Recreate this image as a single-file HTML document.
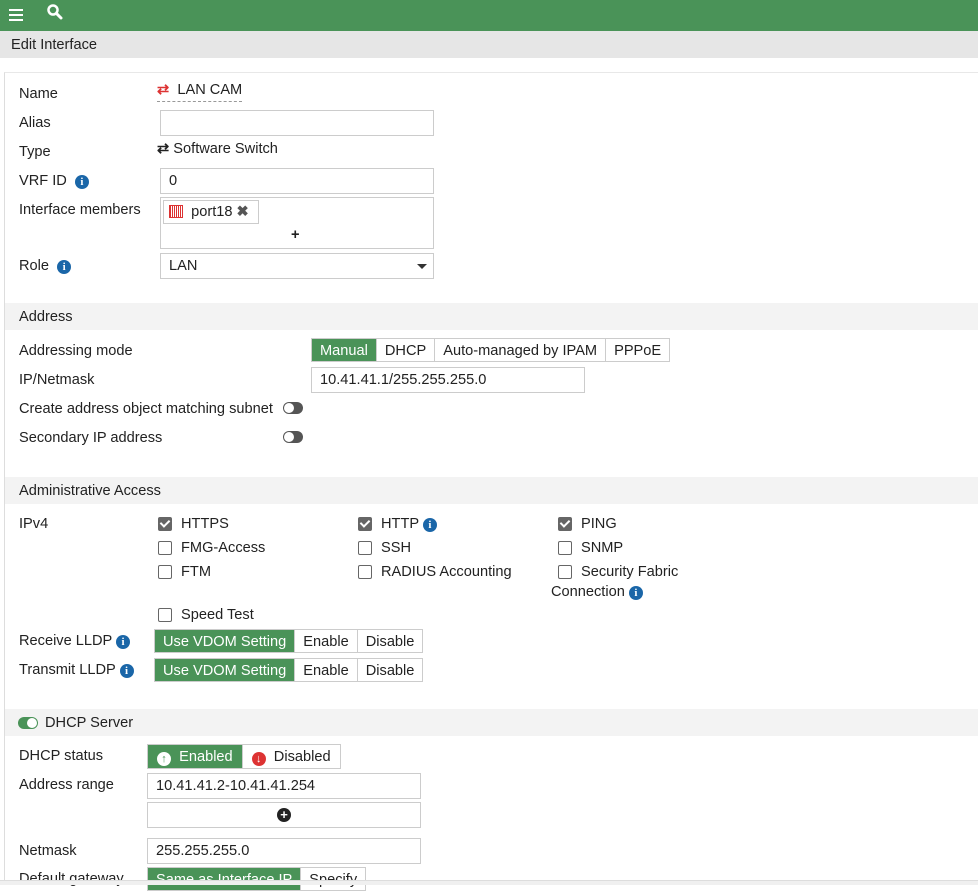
<!DOCTYPE html>
<html><head><meta charset="utf-8"><style>
*{box-sizing:border-box;margin:0;padding:0}
body{width:978px;height:885px;overflow:hidden;background:#fff;font-family:"Liberation Sans",sans-serif;font-size:14.6px;color:#222;position:relative}
.a{position:absolute;white-space:nowrap;line-height:19px}
.inp{position:absolute;border:1px solid #ccc;background:#fff;padding-left:8px;line-height:25px;height:26px}
.sec{position:absolute;left:5px;right:0;height:27px;background:#f3f3f3;padding-left:14px;line-height:29px}
.cb{position:absolute;width:14px;height:14px;border:1.5px solid #666;border-radius:2px;background:#fff}
.cb.on{background:#666;border-color:#666}
.cb.on:after{content:"";position:absolute;left:3px;top:0px;width:4px;height:7px;border:solid #fff;border-width:0 2px 2px 0;transform:rotate(45deg)}
.info{display:inline-block;width:14px;height:14px;border-radius:50%;background:#1a66a8;color:#fff;font-size:11px;font-weight:bold;text-align:center;line-height:14px;vertical-align:0px;font-family:"Liberation Serif",serif}
.seg{position:absolute;display:flex;height:24px;border:1px solid #ccc}
.seg span{padding:0 8px;line-height:24px;border-left:1px solid #ccc;background:#fff}
.seg span:first-child{border-left:none}
.seg span.g{background:#4a9358;color:#fff}
.tog{position:absolute;width:20px;height:12px;border-radius:6px;background:#555}
.tog:after{content:"";position:absolute;left:1px;top:1px;width:10px;height:10px;border-radius:50%;background:#fff}
</style></head><body>
<div class="a" style="left:0;top:0;width:978px;height:31px;background:#4a9358"></div>
<div class="a" style="left:9px;top:9px;width:14px;height:2px;background:#fff;box-shadow:0 5px 0 #fff,0 10px 0 #fff"></div>
<svg class="a" style="left:46px;top:3px" width="18" height="18" viewBox="0 0 18 18"><circle cx="7" cy="7" r="4.5" fill="none" stroke="#fff" stroke-width="2.5"/><path d="M10.5 10.5L15 15" stroke="#fff" stroke-width="3" stroke-linecap="round"/></svg>
<div class="a" style="left:0;top:31px;width:978px;height:27px;background:#e6e6e6;padding-left:11px;line-height:29px">Edit Interface</div>
<div class="a" style="left:4px;top:72px;width:974px;height:808px;border-left:1px solid #ddd;border-top:1px solid #e8e8e8"></div>

<div class="a" style="left:19px;top:85px">Name</div>
<div class="a" style="left:157px;top:81px;border-bottom:1px dashed #999;padding-bottom:1px"><span style="color:#d33;font-weight:bold">⇄</span>&nbsp; LAN CAM</div>
<div class="a" style="left:19px;top:114px">Alias</div>
<div class="inp" style="left:160px;top:110px;width:274px"></div>
<div class="a" style="left:19px;top:143px">Type</div>
<div class="a" style="left:157px;top:140px"><b>⇄</b> Software Switch</div>
<div class="a" style="left:19px;top:172px">VRF ID &nbsp;<span class="info">i</span></div>
<div class="inp" style="left:160px;top:168px;width:274px">0</div>
<div class="a" style="left:19px;top:201px">Interface members</div>
<div class="a" style="left:160px;top:197px;width:274px;height:52px;border:1px solid #ccc"></div>
<div class="a" style="left:163px;top:200px;width:96px;height:24px;border:1px solid #ccc;padding-left:5px;line-height:22px"><span style="display:inline-block;width:14px;height:13px;border:1.5px solid #d33;background:repeating-linear-gradient(90deg,#d33 0 1px,#fff 1px 2px);vertical-align:-2px"></span>&nbsp; port18 <b style="color:#555">✖</b></div>
<div class="a" style="left:291px;top:226px;font-weight:bold">+</div>
<div class="a" style="left:19px;top:257px">Role &nbsp;<span class="info">i</span></div>
<div class="inp" style="left:160px;top:253px;width:274px">LAN<span style="position:absolute;right:6px;top:10px;border:5px solid transparent;border-top:5px solid #333;border-bottom:none"></span></div>

<div class="sec" style="top:303px">Address</div>
<div class="a" style="left:19px;top:342px">Addressing mode</div>
<div class="seg" style="left:311px;top:338px"><span class="g">Manual</span><span>DHCP</span><span>Auto-managed by IPAM</span><span>PPPoE</span></div>
<div class="a" style="left:19px;top:371px">IP/Netmask</div>
<div class="inp" style="left:311px;top:367px;width:274px">10.41.41.1/255.255.255.0</div>
<div class="a" style="left:19px;top:400px">Create address object matching subnet</div>
<div class="tog" style="left:283px;top:402px"></div>
<div class="a" style="left:19px;top:429px">Secondary IP address</div>
<div class="tog" style="left:283px;top:431px"></div>

<div class="sec" style="top:477px">Administrative Access</div>
<div class="a" style="left:19px;top:515px">IPv4</div>
<div class="cb on" style="left:158px;top:517px"></div><div class="a" style="left:181px;top:515px">HTTPS</div>
<div class="cb" style="left:158px;top:541px"></div><div class="a" style="left:181px;top:539px">FMG-Access</div>
<div class="cb" style="left:158px;top:565px"></div><div class="a" style="left:181px;top:563px">FTM</div>
<div class="cb on" style="left:358px;top:517px"></div><div class="a" style="left:381px;top:515px">HTTP <span class="info">i</span></div>
<div class="cb" style="left:358px;top:541px"></div><div class="a" style="left:381px;top:539px">SSH</div>
<div class="cb" style="left:358px;top:565px"></div><div class="a" style="left:381px;top:563px">RADIUS Accounting</div>
<div class="cb on" style="left:558px;top:517px"></div><div class="a" style="left:581px;top:515px">PING</div>
<div class="cb" style="left:558px;top:541px"></div><div class="a" style="left:581px;top:539px">SNMP</div>
<div class="cb" style="left:558px;top:565px"></div><div class="a" style="left:581px;top:563px">Security Fabric</div>
<div class="a" style="left:551px;top:583px">Connection <span class="info">i</span></div>
<div class="cb" style="left:158px;top:608px"></div><div class="a" style="left:181px;top:606px">Speed Test</div>
<div class="a" style="left:19px;top:632px">Receive LLDP <span class="info">i</span></div>
<div class="seg" style="left:154px;top:629px"><span class="g">Use VDOM Setting</span><span>Enable</span><span>Disable</span></div>
<div class="a" style="left:19px;top:661px">Transmit LLDP <span class="info">i</span></div>
<div class="seg" style="left:154px;top:658px"><span class="g">Use VDOM Setting</span><span>Enable</span><span>Disable</span></div>

<div class="sec" style="top:709px;padding-left:40px">DHCP Server</div>
<div class="a" style="left:18px;top:717px;width:20px;height:12px;border-radius:6px;background:#4a9358"><div style="position:absolute;right:1px;top:1px;width:10px;height:10px;border-radius:50%;background:#fff"></div></div>
<div class="a" style="left:19px;top:747px">DHCP status</div>
<div class="seg" style="left:147px;top:744px;height:25px"><span class="g" style="padding:0 9px"><b style="display:inline-block;width:14px;height:14px;border-radius:50%;background:#fff;color:#4a9358;font-size:11px;text-align:center;line-height:14px;vertical-align:-1px">↑</b>&nbsp; Enabled</span><span style="padding:0 9px"><b style="display:inline-block;width:14px;height:14px;border-radius:50%;background:#d33;color:#fff;font-size:11px;text-align:center;line-height:14px;vertical-align:-1px">↓</b>&nbsp; Disabled</span></div>
<div class="a" style="left:19px;top:776px">Address range</div>
<div class="inp" style="left:147px;top:773px;width:274px">10.41.41.2-10.41.41.254</div>
<div class="inp" style="left:147px;top:802px;width:274px"><span style="position:absolute;left:129px;top:5px;width:14px;height:14px;border-radius:50%;background:#222;color:#fff;font-weight:bold;font-size:13px;text-align:center;line-height:14px">+</span></div>
<div class="a" style="left:19px;top:842px">Netmask</div>
<div class="inp" style="left:147px;top:838px;width:274px">255.255.255.0</div>
<div class="a" style="left:19px;top:870px">Default gateway</div>
<div class="seg" style="left:147px;top:867px"><span class="g">Same as Interface IP</span><span>Specify</span></div>
<div class="a" style="left:0;top:880px;width:978px;height:5px;background:#f0f0f0;border-top:1px solid #ddd"></div>
</body></html>
